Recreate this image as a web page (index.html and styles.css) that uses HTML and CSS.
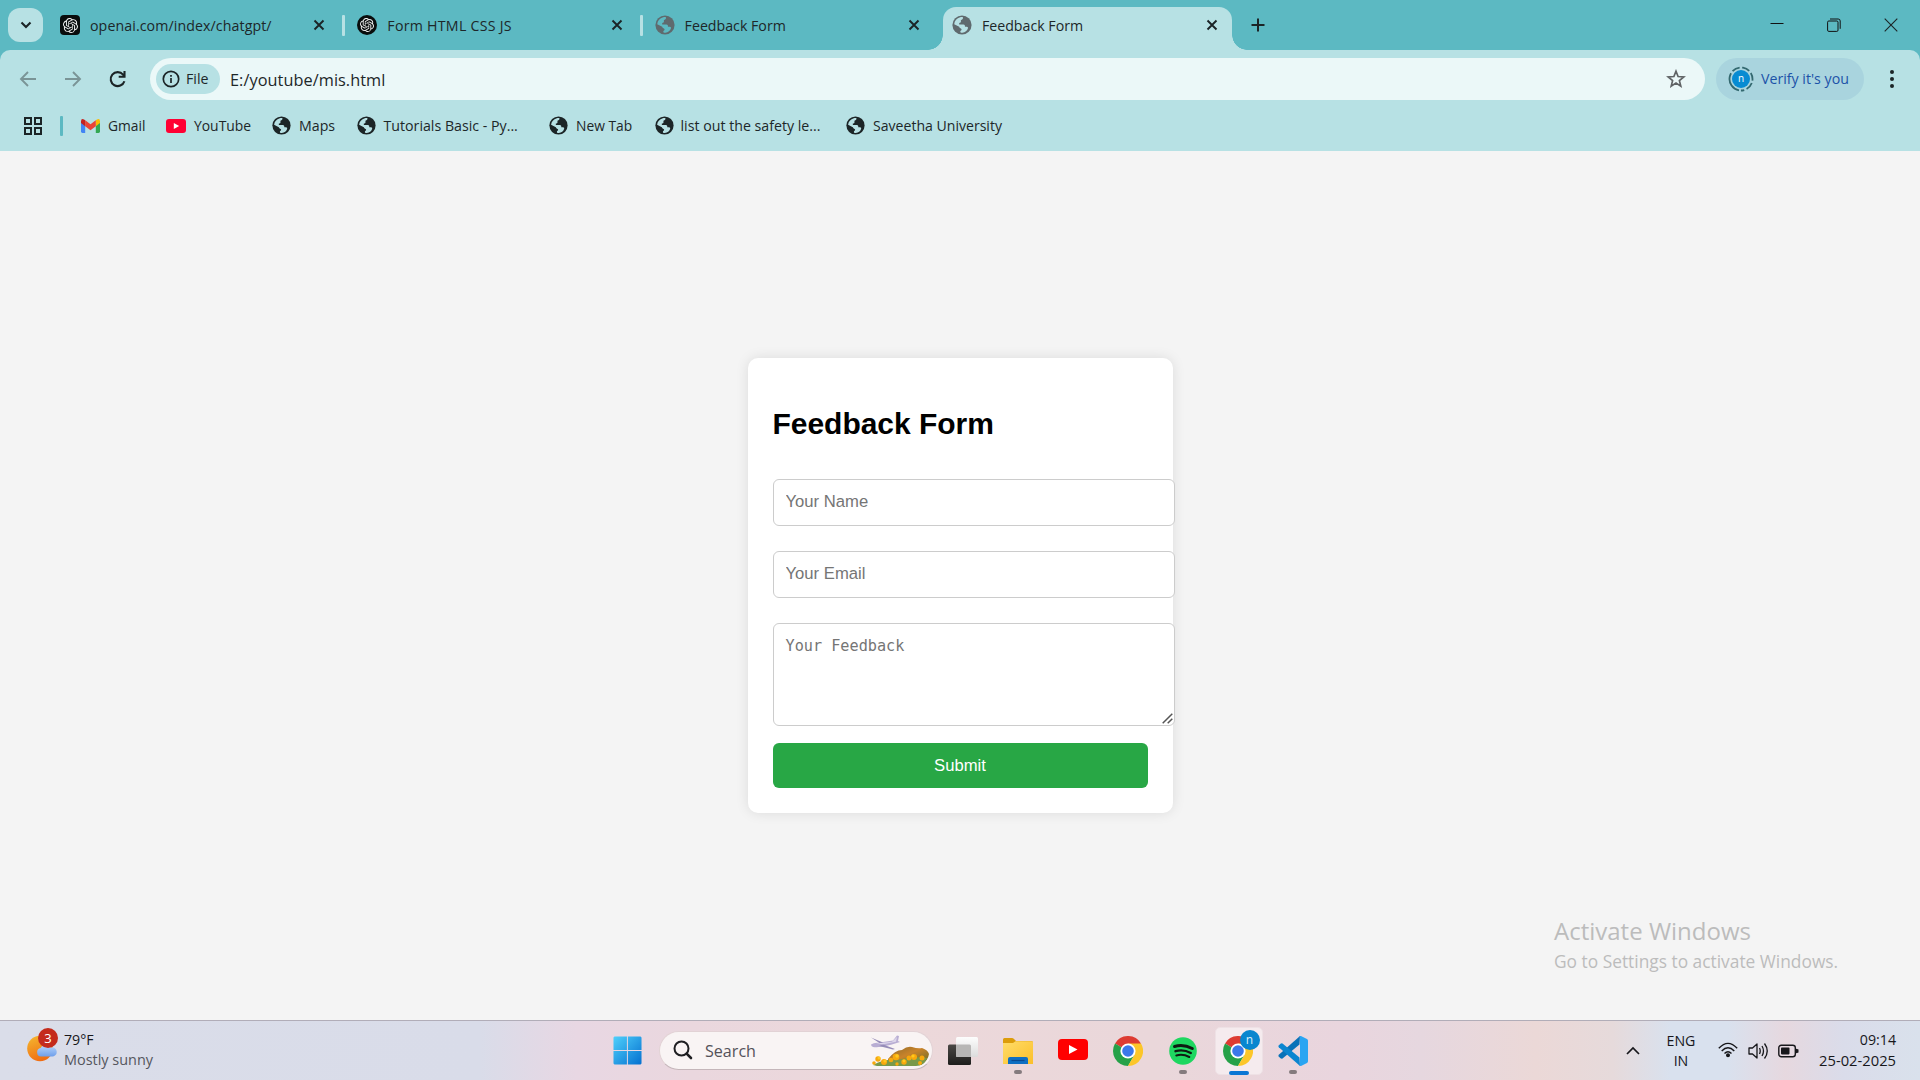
FILE: index.html
```
<!DOCTYPE html>
<html lang="en">
<head>
<meta charset="utf-8">
<title>Feedback Form</title>
<link rel="stylesheet" href="styles.css">
</head>
<body>
<svg class="defs" width="0" height="0" aria-hidden="true">
  <defs>
    <symbol id="globe" viewBox="0 0 20 20">
      <circle cx="10" cy="10" r="9.6" fill="currentColor"/>
      <path class="cut" d="M2.2 9.2C2.5 5.8 4.8 3.2 8.2 2.3C9.4 2 10.6 2 11 2.4C11.3 3.6 10.4 4.6 8.9 5.1V6.8C8.9 7.5 8.2 7.8 7.2 7.9V9.6H11.4C12.7 9.6 12.9 10.4 13 11.8H14.8C15.8 11.8 16.2 12.6 15.9 13.6C15.2 15.8 13.2 17.6 10.4 17.8C8.8 17.9 8.2 17.4 8.3 16.5C8.4 15.3 9.6 15.6 9.6 14.4C9.6 13.2 7.3 13.4 7.2 11.8Z"/>
    </symbol>
    <symbol id="knot" viewBox="0 0 24 24">
      <path fill="#f2f2f2" d="M22.2819 9.8211a5.9847 5.9847 0 0 0-.5157-4.9108 6.0462 6.0462 0 0 0-6.5098-2.9A6.0651 6.0651 0 0 0 4.9807 4.1818a5.9847 5.9847 0 0 0-3.9977 2.9 6.0462 6.0462 0 0 0 .7427 7.0966 5.98 5.98 0 0 0 .511 4.9107 6.051 6.051 0 0 0 6.5146 2.9001A5.9847 5.9847 0 0 0 13.2599 24a6.0557 6.0557 0 0 0 5.7718-4.2058 5.9894 5.9894 0 0 0 3.9977-2.9001 6.0557 6.0557 0 0 0-.7475-7.0729zm-9.022 12.6081a4.4755 4.4755 0 0 1-2.8764-1.0408l.1419-.0804 4.7783-2.7582a.7948.7948 0 0 0 .3927-.6813v-6.7369l2.02 1.1686a.071.071 0 0 1 .038.052v5.5826a4.504 4.504 0 0 1-4.4945 4.4944zm-9.6607-4.1254a4.4708 4.4708 0 0 1-.5346-3.0137l.142.0852 4.783 2.7582a.7712.7712 0 0 0 .7806 0l5.8428-3.3685v2.3324a.0804.0804 0 0 1-.0332.0615L9.74 19.9502a4.4992 4.4992 0 0 1-6.1408-1.6464zM2.3408 7.8956a4.485 4.485 0 0 1 2.3655-1.9728V11.6a.7664.7664 0 0 0 .3879.6765l5.8144 3.3543-2.0201 1.1685a.0757.0757 0 0 1-.071 0l-4.8303-2.7865A4.504 4.504 0 0 1 2.3408 7.872zm16.5963 3.8558L13.1038 8.364 15.1192 7.2a.0757.0757 0 0 1 .071 0l4.8303 2.7913a4.4944 4.4944 0 0 1-.6765 8.1042v-5.6772a.79.79 0 0 0-.407-.667zm2.0107-3.0231l-.142-.0852-4.7735-2.7818a.7759.7759 0 0 0-.7854 0L9.409 9.2297V6.8974a.0662.0662 0 0 1 .0284-.0615l4.8303-2.7866a4.4992 4.4992 0 0 1 6.6802 4.66zM8.3065 12.863l-2.02-1.1638a.0804.0804 0 0 1-.038-.0567V6.0742a4.4992 4.4992 0 0 1 7.3757-3.4537l-.142.0805L8.704 5.459a.7948.7948 0 0 0-.3927.6813zm1.0976-2.3654l2.602-1.4998 2.6069 1.4998v2.9994l-2.5974 1.4997-2.6067-1.4997Z"/>
    </symbol>
    <symbol id="close" viewBox="0 0 12 12">
      <path d="M1.5 1.5L10.5 10.5M10.5 1.5L1.5 10.5" fill="none" stroke="#1b2426" stroke-width="1.9"/>
    </symbol>
    <symbol id="chrome" viewBox="0 0 30 30">
      <path d="M15 15L2.01 7.5A15 15 0 0 1 28 7.5Z" fill="#dd3b32"/>
      <path d="M15 15L2.01 7.5A15 15 0 0 0 15 30L21.5 18.7Z" fill="#26a148"/>
      <path d="M15 7.5H28A15 15 0 0 1 15 30L21.5 18.7Z" fill="#fcc629"/>
      <circle cx="15" cy="15" r="7.6" fill="#fff"/>
      <circle cx="15" cy="15" r="5.8" fill="#3b78ea"/>
    </symbol>
  </defs>
</svg>

<div class="screen">
  <header class="browser">
    <div class="tabstrip">
      <button class="tab-search" aria-label="Search tabs"><svg width="12" height="12" viewBox="0 0 12 12"><path d="M1.5 3.5L6 8L10.5 3.5" fill="none" stroke="#1b2426" stroke-width="2.1"/></svg></button>
      <div class="tabs">
        <div class="tab">
          <span class="favicon square"><svg width="15" height="15"><use href="#knot"/></svg></span>
          <span class="title wide">openai.com/index/chatgpt/</span>
          <svg class="x" width="12" height="12"><use href="#close"/></svg><i class="sep"></i>
        </div>
        <div class="tab">
          <span class="favicon round"><svg width="14" height="14"><use href="#knot"/></svg></span>
          <span class="title caps">Form HTML CSS JS</span>
          <svg class="x" width="12" height="12"><use href="#close"/></svg><i class="sep"></i>
        </div>
        <div class="tab">
          <svg class="globe grey" width="20" height="20"><use href="#globe"/></svg>
          <span class="title">Feedback Form</span>
          <svg class="x" width="12" height="12"><use href="#close"/></svg><i class="sep none"></i>
        </div>
        <div class="tab active">
          <svg class="globe grey on" width="20" height="20"><use href="#globe"/></svg>
          <span class="title">Feedback Form</span>
          <svg class="x" width="12" height="12"><use href="#close"/></svg>
        </div>
      </div>
      <svg class="new-tab" width="14" height="14" viewBox="0 0 14 14"><path d="M7 0.5V13.5M0.5 7H13.5" stroke="#1b2426" stroke-width="2"/></svg>
      <div class="window-buttons">
        <svg width="14" height="14" viewBox="0 0 14 14"><path d="M0.5 5.5H13.5" stroke="#111" stroke-width="1"/></svg>
        <svg width="14" height="14" viewBox="0 0 14 14" fill="none" stroke="#111"><rect x="0.6" y="3" width="10.4" height="10.4" rx="1.2"/><path d="M3 1H11.2Q13.2 1 13.2 3V10.8"/></svg>
        <svg width="14" height="14" viewBox="0 0 14 14"><path d="M0.7 0.7L13.3 13.3M13.3 0.7L0.7 13.3" stroke="#1b2426" stroke-width="1.1"/></svg>
      </div>
    </div>

    <div class="toolbar">
      <div class="nav">
        <svg width="18" height="18" viewBox="0 0 18 18" fill="none" stroke="#7a9496" stroke-width="1.9"><path d="M9 2L2 9L9 16M2 9H17"/></svg>
        <svg width="18" height="18" viewBox="0 0 18 18" fill="none" stroke="#7a9496" stroke-width="1.9"><path d="M9 2L16 9L9 16M16 9H1"/></svg>
        <svg width="18" height="18" viewBox="0 0 18 18" fill="none" stroke="#1b2426" stroke-width="2.1"><path d="M15.4 11.2A7 7 0 1 1 14.1 4.6L15.1 5.9M15.5 1V6.8H9.7"/></svg>
      </div>
      <div class="omnibox">
        <span class="chip">
          <svg width="18" height="18" viewBox="0 0 18 18"><circle cx="9" cy="9" r="7.7" fill="none" stroke="#1b2426" stroke-width="1.7"/><path d="M9 8V13M9 5V6.7" stroke="#1b2426" stroke-width="1.7"/></svg>
          File
        </span>
        <span class="url">E:/youtube/mis.html</span>
        <svg class="star" width="20" height="20" viewBox="0 0 20 20"><path d="M10 2.2L12.1 7.5L17.8 7.9L13.4 11.6L14.8 17.1L10 14.1L5.2 17.1L6.6 11.6L2.2 7.9L7.9 7.5Z" fill="none" stroke="#5f6365" stroke-width="1.7"/></svg>
      </div>
      <div class="verify">
        <span class="avatar"><svg width="26" height="26" viewBox="0 0 26 26"><circle cx="13" cy="13" r="11.5" fill="none" stroke="#33686f" stroke-width="1.8" stroke-dasharray="22 2.5 8 2.5 8 2.5 8 2.5 8 2.5 3.3 2.5" transform="rotate(100 13 13)"/><circle cx="13" cy="13" r="9" fill="#078bd2"/></svg><b>n</b></span>
        <span class="verify-text">Verify it's you</span>
      </div>
      <svg class="menu" width="6" height="18" viewBox="0 0 6 18" fill="#1b2426"><circle cx="3" cy="2" r="2"/><circle cx="3" cy="9" r="2"/><circle cx="3" cy="16" r="2"/></svg>
    </div>

    <div class="bookmarks">
      <svg class="apps" width="18" height="18" viewBox="0 0 18 18" fill="none" stroke="#1b2426" stroke-width="2"><path d="M1 1H7V7H1ZM11 1H17V7H11ZM1 11H7V17H1ZM11 11H17V17H11Z"/></svg>
      <i class="divider"></i>
      <span class="bm b1"><svg width="19" height="14" viewBox="0 0 19 14"><path d="M0 2V12.6Q0 14 1.4 14H4.2V5Z" fill="#4285f4"/><path d="M19 2V12.6Q19 14 17.6 14H14.8V5Z" fill="#34a853"/><path d="M14.8 1.2L16 .4Q19-.8 19 2.4V4L14.8 7.2Z" fill="#fbbc04"/><path d="M4.2 1.2L9.5 5.2L14.8 1.2V7.2L9.5 11.2L4.2 7.2Z" fill="#ea4335"/><path d="M0 2.4Q0-.8 3 .4L4.2 1.2V7.2L0 4Z" fill="#c5221f"/></svg>Gmail</span>
      <span class="bm b2"><svg width="20" height="14" viewBox="0 0 20 14"><rect width="20" height="14" rx="3" fill="#ff0033"/><path d="M7.8 4L13.2 7L7.8 10Z" fill="#fff"/></svg>YouTube</span>
      <span class="bm b3"><svg class="globe" width="19" height="19"><use href="#globe"/></svg>Maps</span>
      <span class="bm b4"><svg class="globe" width="19" height="19"><use href="#globe"/></svg>Tutorials Basic - Py...</span>
      <span class="bm b5"><svg class="globe" width="19" height="19"><use href="#globe"/></svg>New Tab</span>
      <span class="bm b6"><svg class="globe" width="19" height="19"><use href="#globe"/></svg>list out the safety le...</span>
      <span class="bm b7"><svg class="globe" width="19" height="19"><use href="#globe"/></svg>Saveetha University</span>
    </div>
  </header>

  <main class="page">
    <form class="card">
      <h2>Feedback Form</h2>
      <input type="text" placeholder="Your Name">
      <input type="email" placeholder="Your Email">
      <div class="feedback">
        <textarea placeholder="Your Feedback"></textarea>
        <svg class="grip" width="11" height="11" viewBox="0 0 11 11"><path d="M.7 10.300L10.300 .7M5.700 10.300L10.300 5.700" stroke="#555" stroke-width="1.500"/></svg>
      </div>
      <button type="button">Submit</button>
    </form>
    <div class="watermark"><p class="big">Activate Windows</p><p class="small">Go to Settings to activate Windows.</p></div>
  </main>

  <footer class="taskbar">
    <div class="weather">
      <span class="weather-icon">
        <svg width="34" height="36" viewBox="0 0 34 36"><defs><linearGradient id="sun" x1="0.2" y1="0" x2="0.6" y2="1"><stop offset="0" stop-color="#f4b52e"/><stop offset="1" stop-color="#f06a12"/></linearGradient><linearGradient id="cloud" x1="0" y1="0" x2="0" y2="1"><stop offset="0" stop-color="#b9d7fd"/><stop offset="1" stop-color="#6f9fea"/></linearGradient></defs>
        <circle cx="13" cy="22.500" r="12.800" fill="url(#sun)"/><path d="M14 30.500A4.300 4.300 0 0 1 13.600 22A6 6 0 0 1 24 21.500A4.600 4.600 0 1 1 24.500 30.500Z" fill="url(#cloud)"/></svg>
        <b class="badge">3</b>
      </span>
      <div class="weather-text"><span>79°F</span><span class="cond">Mostly sunny</span></div>
    </div>

    <div class="apps-row">
      <span class="cell start"><svg width="29" height="29" viewBox="0 0 30 30"><defs><linearGradient id="win" x1="0" y1="0" x2="1" y2="1"><stop offset="0" stop-color="#4fd0fb"/><stop offset="1" stop-color="#0470d0"/></linearGradient></defs><path d="M1.500 .5H14.400V14.400H.5V1.500ZM15.400 .5H28.500L29.500 1.500V14.400H15.400ZM.5 15.400H14.400V29.500H1.500L.5 28.500ZM15.400 15.400H29.500V28.500L28.500 29.500H15.400Z" fill="url(#win)"/></svg></span>
      <div class="search">
        <svg class="lens" width="20" height="20" viewBox="0 0 20 20" fill="none" stroke="#1f1f22"><circle cx="8.500" cy="8.500" r="7" stroke-width="2"/><path d="M13.600 13.600L18 18" stroke-width="2.600" stroke-linecap="round"/></svg>
        <span>Search</span>
        <svg class="scene" width="59" height="32" viewBox="0 0 59 32">
          <defs><linearGradient id="hill" x1="0" y1="0" x2="1" y2="1"><stop offset="0" stop-color="#8c6a2a"/><stop offset=".45" stop-color="#c9832a"/><stop offset="1" stop-color="#5f6a28"/></linearGradient></defs>
          <path d="M17 24Q24 15 31 15Q36 11 41 12Q47 14 51 13Q57 15 58 19Q57 26 50 30H17Z" fill="url(#hill)"/>
          <path d="M2 30Q12 24 26 25Q42 21 56 23Q53 31 45 31H6Z" fill="#78994a"/>
          <g fill="#f7a80c"><circle cx="3" cy="28" r="1.800"/><circle cx="7" cy="24" r="2.700"/><circle cx="13" cy="27" r="3"/><circle cx="20" cy="25" r="2.300"/><circle cx="25" cy="22" r="3.300"/><circle cx="33" cy="27" r="2.700"/><circle cx="38" cy="23" r="2.500"/><circle cx="43" cy="22" r="3"/><circle cx="51" cy="23" r="2.500"/><circle cx="49" cy="28" r="2"/><circle cx="26" cy="29" r="1.700"/></g>
          <g fill="#ffc81e"><circle cx="8" cy="23" r="1.500"/><circle cx="14" cy="26" r="1.600"/><circle cx="26" cy="21" r="1.700"/><circle cx="42" cy="21" r="1.600"/><circle cx="33" cy="26" r="1.400"/></g>
          <path d="M0 9.500Q3 7.500 7 7.800L22 5.500L26 .5L28 1L27 6L29 7L20 9.800Q9 13 2 12Q0 11 0 9.500Z" fill="#b9aed3"/><path d="M0 2.500L12 7.500L10 9ZM12 9.500L24 14L22 14.500L8 11Z" fill="#968cb8"/><path d="M5 8.500L21 6.800L26 2L25 6.800L12 9.300Z" fill="#dcd5ea"/>
        </svg>
      </div>
      <span class="cell"><svg width="30" height="30" viewBox="0 0 30 30"><defs><linearGradient id="tv" x1="0" y1="0" x2="0" y2="1"><stop offset="0" stop-color="#4a4845"/><stop offset="1" stop-color="#1e1e1c"/></linearGradient><linearGradient id="tw" x1="0" y1="0" x2="0" y2="1"><stop offset="0" stop-color="#fdfdfd"/><stop offset="1" stop-color="#dcdcdc"/></linearGradient></defs><rect x="0" y="8.500" width="23" height="20.500" rx="1.500" fill="url(#tv)"/><rect x="8" y="1" width="22" height="20" rx="1.500" fill="url(#tw)"/><path d="M8 8.500H21.500Q23 8.500 23 10V21H9.500Q8 21 8 19.500Z" fill="#b7b6b5"/></svg></span>
      <span class="cell run"><svg width="30" height="28" viewBox="0 0 30 28"><defs><linearGradient id="fold" x1="0" y1="0" x2="1" y2="1"><stop offset="0" stop-color="#ffdc69"/><stop offset="1" stop-color="#fbbf2a"/></linearGradient></defs><path d="M0 2.500Q0 1 1.500 1H9Q10 1 11 2L13 4H28.500Q30 4 30 5.500V12H0Z" fill="#dc9c0a"/><path d="M0 6H10L12.500 4.300H28.500Q30 4.300 30 5.500V27H0Z" fill="url(#fold)"/><path d="M5 27V22Q5 20 7 20H23Q25 20 25 22V27Z" fill="#0f6fc2"/><path d="M8.500 23.500H21.500" stroke="#0a4a90" stroke-width="1.200"/></svg></span>
      <span class="cell"><svg class="yt" width="30" height="21" viewBox="0 0 30 21"><rect width="30" height="21" rx="4" fill="#f00"/><path d="M11 6L19.500 10.500L11 15Z" fill="#fff"/></svg></span>
      <span class="cell"><svg width="30" height="30"><use href="#chrome"/></svg></span>
      <span class="cell run"><svg width="28" height="28" viewBox="0 0 28 28"><circle cx="14" cy="14" r="13.800" fill="#1ed760"/><g fill="none" stroke="#0e1a12" stroke-linecap="round"><path d="M5.500 9.500Q14.500 7 23.300 11.500" stroke-width="3"/><path d="M6.500 14.200Q14.500 12 21.800 16" stroke-width="2.400"/><path d="M7.300 18.500Q14 16.700 20.300 20" stroke-width="2"/></g></svg></span>
      <span class="cell current"><span class="tile"><svg width="30" height="30"><use href="#chrome"/></svg><b class="profile">n</b></span></span>
      <span class="cell run"><svg width="30" height="30" viewBox="0 0 30 30"><path d="M21.500 8.500L4.500 22.500Q3.500 23 2.500 22.200L.7 20.600Q0 19.700 .8 18.800L22 0Z" fill="#0a72b8"/><path d="M21.500 21.500L4.500 7.500Q3.500 7 2.500 7.800L.7 9.400Q0 10.300 .8 11.200L22 30Z" fill="#0b85d0"/><path d="M22 0Q22.500-.2 23.500 .3L29 3Q30 3.500 30 4.800V25.200Q30 26.500 29 27L23.500 29.700Q22.500 30.200 21.200 29.500Q22 29 22 27.500V2.500Q22 1 21.200 .5Z" fill="#2aa5f2"/></svg></span>
    </div>

    <div class="tray">
      <svg width="14" height="9" viewBox="0 0 14 9"><path d="M1 8L7 2L13 8" fill="none" stroke="#17171b" stroke-width="1.700"/></svg>
      <div class="lang"><span>ENG</span><span>IN</span></div>
      <svg class="wifi" width="20" height="16" viewBox="0 0 20 16" fill="none" stroke="#17171b" stroke-width="1.400"><path d="M.8 6.300Q10-3.500 19.200 6.300"/><path d="M3.700 9Q10 2.500 16.300 9"/><path d="M6.500 11.500Q10 8 13.500 11.500"/><circle cx="10" cy="13.300" r="1.300" fill="#17171b"/></svg>
      <svg width="21" height="18" viewBox="0 0 21 18" fill="none" stroke="#17171b" stroke-width="1.300"><path d="M1 6H4.500L9 2V16L4.500 12H1Z" stroke-linejoin="round"/><path d="M11.500 6Q13 9 11.500 12M14 4Q17 9 14 14M16.500 1.500Q22 9 16.500 16.500"/></svg>
      <svg width="21" height="14" viewBox="0 0 21 14"><rect x=".8" y="1.300" width="16.500" height="11.400" rx="2.500" fill="none" stroke="#17171b" stroke-width="1.400"/><rect x="3" y="3.600" width="8.500" height="6.800" rx=".8" fill="#17171b"/><path d="M17.500 4.500L20.500 5.500V8.500L17.500 9.500Z" fill="#17171b"/></svg>
      <div class="clock"><span class="time">09:14</span><span class="date">25-02-2025</span></div>
    </div>
  </footer>
</div>
</body>
</html>
```
FILE: styles.css
```
* { box-sizing: border-box; }
body { margin: 0; font-family: "Open Sans", "Noto Sans", sans-serif; color: #1d2729; }
svg { display: block; flex: none; }
.defs { position: absolute; }
.screen { width: 1920px; height: 1080px; display: flex; flex-direction: column; overflow: hidden; }

/* browser chrome */
.browser { height: 151px; background: #5cb9c2; font-size: 14.2px; flex: none; }
.tabstrip { height: 50px; display: flex; align-items: center; padding-left: 8px; }
.tab-search { width: 35px; height: 34px; border: 0; padding: 0; border-radius: 12px; background: #b7e1e4; display: grid; place-items: center; }
.tabs { display: flex; height: 50px; margin-left: 8px; padding-top: 7px; width: 1181px; flex: none; }
.tab { width: 297.3px; display: flex; align-items: center; padding: 0 3px 7px 9px; flex: none; }
.favicon { width: 20px; height: 20px; background: #090d0d; display: grid; place-items: center; flex: none; }
.favicon.square { border-radius: 4px; }
.favicon.round { border-radius: 50%; }
.title { margin-left: 10px; flex: 1; white-space: nowrap; }
.title.wide { letter-spacing: 0.09px; }
.title.caps { letter-spacing: 0.26px; }
.x { margin-right: 17px; }
.sep { width: 3px; height: 21px; border-radius: 1px; background: #b7e1e4; }
.sep.none { background: none; }
.globe { color: #1c2527; --land: #b7e1e4; }
.globe.grey { color: #5f6a6e; }
.globe.grey:not(.on) { --land: #5cb9c2; }
.cut { fill: var(--land); }
.tab.active { width: 289px; background: #b7e1e4; border-radius: 13px 13px 0 0; position: relative; padding-right: 0; padding-left: 9px; }
.tab.active .x { margin-right: 14px; }
.tab.active::before, .tab.active::after { content: ""; position: absolute; bottom: 0; width: 15px; height: 15px; }
.tab.active::before { left: -15px; background: radial-gradient(circle at 0 0, transparent 14.500px, #b7e1e4 15px); }
.tab.active::after { right: -15px; background: radial-gradient(circle at 100% 0, transparent 14.500px, #b7e1e4 15px); }
.new-tab { margin-left: 19px; }
.window-buttons { margin-left: auto; display: flex; gap: 43px; padding-right: 22px; }

.toolbar { height: 54px; margin-bottom: -4px; padding-top: 8px; background: #b7e1e4; border-radius: 10px 10px 0 0; display: flex; align-items: flex-start; }
.nav { width: 150px; height: 42px; display: flex; align-items: center; gap: 27px; padding-left: 19px; }
.omnibox { width: 1555px; height: 42px; border-radius: 21px; background: #ebf8f8; display: flex; align-items: center; padding: 0 20px 0 6px; }
.chip { width: 64px; height: 30px; border-radius: 15px; background: #b7e1e4; display: flex; align-items: center; gap: 6px; padding: 0 0 1px 6px; }
.url { margin-left: 10px; padding-top: 2px; font-size: 16.300px; letter-spacing: .06px; flex: 1; }
.star { margin-right: -1px; }
.verify { margin-left: 11px; width: 148px; height: 42px; border-radius: 21px; background: #a9d4de; color: #1c52a8; display: flex; align-items: center; gap: 7px; padding-left: 12px; }
.verify-text { padding-bottom: 2px; }
.avatar { position: relative; width: 26px; height: 26px; }
.avatar b { position: absolute; inset: 0; text-align: center; font: 10px/25px "Open Sans", sans-serif; color: #fff; }
.menu { margin: 12px 0 0 25px; }

.bookmarks { height: 51px; background: #b7e1e4; display: flex; align-items: center; padding-left: 24px; }
.divider { width: 3px; height: 20px; border-radius: 1px; background: #5cb9c2; margin-left: 18px; }
.bm { display: flex; align-items: center; gap: 8px; white-space: nowrap; flex: none; }
.b1 { margin-left: 18px; width: 85px; font-size: 13.800px; }
.b2 { width: 106px; font-size: 13.900px; }
.b3 { width: 84.500px; }
.b4 { width: 192.500px; }
.b5 { width: 105.500px; font-size: 13.800px; }
.b6 { width: 191.500px; gap: 7px; }
.b7 { font-size: 14.080px; }

/* web page */
.page { height: 869px; flex: none; background: #f4f4f4; display: flex; justify-content: center; align-items: center; position: relative; }
.card { width: 425px; padding: 25px; background: #fff; border-radius: 10px; box-shadow: 0 0 12.500px rgba(0, 0, 0, .1); font-family: "Liberation Sans", Arial, sans-serif; display: flex; flex-direction: column; align-items: flex-start; height: 455px; }
.card h2 { margin: 24px 0 0; height: 72px; font-size: 30px; line-height: 34px; color: #000; letter-spacing: -.03px; }
.card input, .card textarea { width: 402px; border: 1px solid #ccc; border-radius: 6px; padding: 12px; margin: 0; flex: none; background: #fff; }
.card input { height: 47px; margin-bottom: 25px; padding-bottom: 14px; font: 16.670px "Liberation Sans", Arial, sans-serif; }
.feedback { width: 402px; height: 103px; margin-bottom: 17px; position: relative; flex: none; }
.card textarea { display: block; height: 103px; padding-top: 13px; resize: none; font: 15.200px "DejaVu Sans Mono", monospace; }
.grip { position: absolute; right: 2px; bottom: 2px; }
.card ::placeholder { color: #757575; opacity: 1; }
.card button { width: 375px; height: 45px; border: 0; border-radius: 6px; background: #28a745; color: #fff; font: 16.670px "Liberation Sans", Arial, sans-serif; padding: 0; }
.watermark { position: absolute; left: 1554px; top: 764px; color: #bcbcbc; white-space: nowrap; }
.watermark p { margin: 0; }
.big { font-size: 24px; line-height: 32px; }
.small { font-size: 17.350px; line-height: 28px; }

/* taskbar */
.taskbar { height: 60px; flex: none; border-top: 1px solid #b1adb8; background: linear-gradient(90deg, #dadde9 0, #d9dce9 25%, #e8d7e3 30%, #ead7de 36%, #ecd8da 47%, #ead7da 60%, #e9d5de 70%, #e6d7df 74%, #ebd8d7 80%, #e6dadb 84%, #d9e1ee 87%, #d9e1ee 90%, #e6d8df 93%, #dadcea 96%, #d9e1ec 100%); display: grid; grid-template-columns: 600px 1020px 276px; font-size: 14.200px; color: #17171b; }
.weather { display: flex; padding: 5px 0 0 27px; }
.weather-icon { position: relative; width: 37px; height: 36px; }
.badge { position: absolute; left: 11px; top: 2px; width: 20px; height: 20px; border-radius: 50%; background: #c42b1c; color: #fff; font: 13px/20px "Open Sans", sans-serif; text-align: center; }
.weather-text { display: flex; flex-direction: column; line-height: 20px; padding-top: 4px; }
.cond { color: #55565d; font-size: 14.440px; }
.apps-row { display: flex; align-items: center; }
.cell { width: 55px; height: 59px; display: grid; place-items: center; position: relative; flex: none; padding-right: 1px; }
.cell.current { padding-right: 0; }
.yt { margin-bottom: 2px; }
.run::after { content: ""; position: absolute; left: 23px; bottom: 6px; width: 8px; height: 4px; border-radius: 2px; background: #857b7e; }
.search { margin: 0 3px 0 4px; width: 274px; height: 39px; border-radius: 20px; background: #f9f4f4; border: 1px solid #e2d2d5; border-bottom-color: #c5b6ba; display: flex; align-items: center; font-size: 16.100px; color: #55525a; padding: 0 2px 0 13px; }
.search span { flex: 1; margin-left: 12px; }
.lens { margin-bottom: 1px; }
.tile { width: 48px; height: 48px; border-radius: 5px; background: #f5ebee; border: 1px solid #eee1e5; display: grid; place-items: center; position: relative; padding-right: 1px; }
.tile::after { content: ""; position: absolute; left: 13px; bottom: -1px; width: 20px; height: 4px; border-radius: 2px; background: #0a76d4; }
.profile { position: absolute; left: 24px; top: 2px; width: 20px; height: 20px; border-radius: 50%; background: #0886cf; color: #d9f0fb; font: 12px/19px "Open Sans", sans-serif; text-align: center; }
.tray { display: grid; grid-template-columns: 26px 70px 27px 30px 30px 93px; align-items: center; justify-items: center; }
.lang, .clock { display: flex; flex-direction: column; line-height: 20px; }
.lang { align-items: center; }
.wifi { margin: 0 3px 2px 0; }
.clock { justify-self: end; align-items: flex-end; padding-bottom: 2px; }
.date { font-size: 14.760px; }
```
